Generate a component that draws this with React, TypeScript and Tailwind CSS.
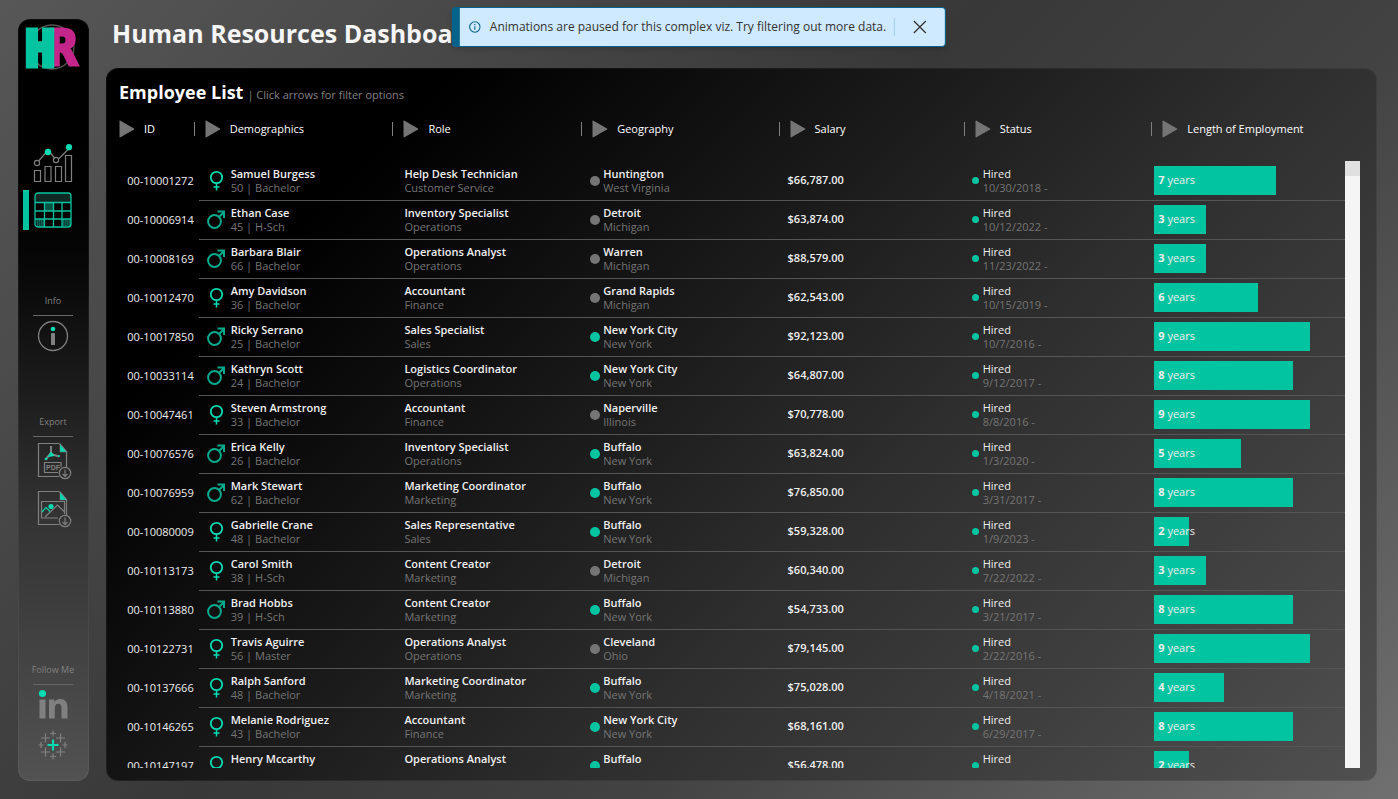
import React from "react";

type Gender = "f" | "m";

interface Employee {
  id: string;
  gender: Gender;
  name: string;
  profile: string;
  role: string;
  department: string;
  city: string;
  state: string;
  salary: string;
  hired: string;
  years: number;
}

type Row = [string, Gender, string, string, string, string, string, string, string, string, number];

const rows: Row[] = [
  ["00-10001272", "f", "Samuel Burgess", "50 | Bachelor", "Help Desk Technician", "Customer Service", "Huntington", "West Virginia", "$66,787.00", "10/30/2018 -", 7],
  ["00-10006914", "m", "Ethan Case", "45 | H-Sch", "Inventory Specialist", "Operations", "Detroit", "Michigan", "$63,874.00", "10/12/2022 -", 3],
  ["00-10008169", "m", "Barbara Blair", "66 | Bachelor", "Operations Analyst", "Operations", "Warren", "Michigan", "$88,579.00", "11/23/2022 -", 3],
  ["00-10012470", "f", "Amy Davidson", "36 | Bachelor", "Accountant", "Finance", "Grand Rapids", "Michigan", "$62,543.00", "10/15/2019 -", 6],
  ["00-10017850", "m", "Ricky Serrano", "25 | Bachelor", "Sales Specialist", "Sales", "New York City", "New York", "$92,123.00", "10/7/2016 -", 9],
  ["00-10033114", "m", "Kathryn Scott", "24 | Bachelor", "Logistics Coordinator", "Operations", "New York City", "New York", "$64,807.00", "9/12/2017 -", 8],
  ["00-10047461", "f", "Steven Armstrong", "33 | Bachelor", "Accountant", "Finance", "Naperville", "Illinois", "$70,778.00", "8/8/2016 -", 9],
  ["00-10076576", "m", "Erica Kelly", "26 | Bachelor", "Inventory Specialist", "Operations", "Buffalo", "New York", "$63,824.00", "1/3/2020 -", 5],
  ["00-10076959", "m", "Mark Stewart", "62 | Bachelor", "Marketing Coordinator", "Marketing", "Buffalo", "New York", "$76,850.00", "3/31/2017 -", 8],
  ["00-10080009", "f", "Gabrielle Crane", "48 | Bachelor", "Sales Representative", "Sales", "Buffalo", "New York", "$59,328.00", "1/9/2023 -", 2],
  ["00-10113173", "f", "Carol Smith", "38 | H-Sch", "Content Creator", "Marketing", "Detroit", "Michigan", "$60,340.00", "7/22/2022 -", 3],
  ["00-10113880", "m", "Brad Hobbs", "39 | H-Sch", "Content Creator", "Marketing", "Buffalo", "New York", "$54,733.00", "3/21/2017 -", 8],
  ["00-10122731", "f", "Travis Aguirre", "56 | Master", "Operations Analyst", "Operations", "Cleveland", "Ohio", "$79,145.00", "2/22/2016 -", 9],
  ["00-10137666", "f", "Ralph Sanford", "48 | Bachelor", "Marketing Coordinator", "Marketing", "Buffalo", "New York", "$75,028.00", "4/18/2021 -", 4],
  ["00-10146265", "f", "Melanie Rodriguez", "43 | Bachelor", "Accountant", "Finance", "New York City", "New York", "$68,161.00", "6/29/2017 -", 8],
  ["00-10147197", "f", "Henry Mccarthy", "43 | Bachelor", "Operations Analyst", "Operations", "Buffalo", "New York", "$56,478.00", "5/14/2023 -", 2],
];

const employees: Employee[] = rows.map(
  ([id, gender, name, profile, role, department, city, state, salary, hired, years]) => ({
    id, gender, name, profile, role, department, city, state, salary, hired, years,
  })
);

const MAX_YEARS = 11;

function Logo() {
  return (
    <svg width="60" height="48" viewBox="0 0 60 48" role="img" aria-label="HR">
      <circle cx="27" cy="23" r="22" fill="none" stroke="#555" strokeWidth="1.3" />
      <text x="23" y="41" fontFamily="'DejaVu Sans Mono', monospace" fontWeight="700" fontSize="49" fill="#c4268c" stroke="#c4268c" strokeWidth="3">R</text>
      <text x="0" y="42" fontFamily="'DejaVu Sans Mono', monospace" fontWeight="700" fontSize="50" fill="#03c4a1" stroke="#03c4a1" strokeWidth="5">H</text>
    </svg>
  );
}

function ChartIcon() {
  return (
    <svg width="42" height="40" viewBox="0 0 42 40" fill="none" stroke="#808080" strokeWidth="1.2">
      <path d="M7 16.5l7.5-8.5M18 8.5l5 6M27 14.5L37 4.5" />
      <circle cx="5" cy="19" r="2.6" />
      <circle cx="24" cy="16" r="2.6" />
      <circle cx="16" cy="8" r="3.2" fill="#03dbb2" stroke="none" />
      <circle cx="37" cy="3.2" r="3.1" fill="#03dbb2" stroke="none" />
      <path d="M2.5 26.5h6v11h-6zM13 22.5h6v15h-6zM23.500 22.500h6v15h-6zM33.500 11.500h6v26h-6z" />
    </svg>
  );
}

function TableIcon() {
  return (
    <svg width="38" height="36" viewBox="0 0 38 36" fill="none" stroke="#03c4a1" strokeWidth="1.3">
      <path d="M1 10V4q0-3 3-3h30q3 0 3 3v6z" fill="#0f2a25" stroke="none" />
      <path d="M11 11h8v8h-8zM2 27h9v8H3zM28 27h9v7H28z" fill="#066555" stroke="none" />
      <path d="M11.500 13h7M11.500 15h7M11.500 17h7M2 29h9M2 31h9M2 33h9M28 29h8M28 31h8M28 33h8" stroke="#04392f" strokeDasharray="1 1" />
      <rect x="1" y="1" width="36" height="34" rx="3" />
      <path d="M1 10.500h36M1 19h36M1 27h36M10.500 10.500V35M19.500 10.500V35M28 10.500V35" />
    </svg>
  );
}

function InfoIcon() {
  return (
    <svg width="32" height="32" viewBox="0 0 32 32">
      <circle cx="16" cy="16" r="14.500" fill="none" stroke="#808080" strokeWidth="1.3" />
      <circle cx="16" cy="9" r="2.300" fill="#03dbb2" />
      <rect x="14" y="13" width="4" height="12" rx="0.5" fill="#808080" />
    </svg>
  );
}

function FileIcon({ kind }: { kind: "pdf" | "image" }) {
  return (
    <svg width="36" height="38" viewBox="0 0 36 38" fill="none" stroke="#808080" strokeWidth="1.200">
      <path d="M22 1.500H1.500v33h21M22.500 1.500l7 8v16" />
      <path d="M23 2v8h6.500z" fill="#03dbb2" stroke="#808080" strokeWidth="0.500" />
      {kind === "pdf" ? (
        <>
          <path d="M14 4v7l-5 6M14 12l8 2.500" strokeWidth="2" />
          <path d="M14 10.500l-2.500 4 5-1z" fill="#03dbb2" stroke="#03dbb2" />
          <circle cx="9" cy="17" r="1.300" fill="#03dbb2" stroke="none" />
          <circle cx="22" cy="14" r="1" fill="#03dbb2" stroke="none" />
          <path d="M24 25v-4.500H7.500v10H21" />
          <text x="9" y="28" fontSize="7" fontWeight="700" fontFamily="'Liberation Sans', sans-serif" fill="#808080" stroke="none">PDF</text>
        </>
      ) : (
        <>
          <path d="M21 28H4.500V11.500h23V24" />
          <path d="M8 27l12.500-12 6.500 6.500" />
          <path d="M5 22l4-4.500 4 4" stroke="#03dbb2" />
          <circle cx="14" cy="16.500" r="2.600" fill="#03dbb2" stroke="none" />
        </>
      )}
      <circle cx="28" cy="31" r="5.700" />
      <path d="M28 27.500v7M25.500 32l2.500 2.500 2.500-2.500" />
    </svg>
  );
}

function LinkedInIcon() {
  return (
    <svg width="32" height="32" viewBox="0 0 32 32" fill="#808080">
      <circle cx="5.500" cy="4.500" r="3.600" fill="#03dbb2" />
      <rect x="2.500" y="10.500" width="6" height="19" />
      <path d="M12 10.500h5.300v2.600q2-3.100 6.200-3.100 7 0 7 8.500v11h-6V19.500q0-4.700-3.300-4.700-3.400 0-3.400 4.700v10H12z" />
    </svg>
  );
}

function TableauIcon() {
  return (
    <svg width="32" height="32" viewBox="0 0 32 32" fill="none" stroke="#808080" strokeWidth="1.200">
      <path d="M16 1.500v6M13 4.500h6M16 24.500v6M13 27.500h6M1.500 16h5M4 13v6M25.500 16h5M28 13v6" />
      <path d="M8.500 4.500v9M4 9h9M23.500 4.500v9M19 9h9M8.500 18.500v9M4 23h9M23.500 18.500v9M19 23h9" />
      <path d="M16 10.500v11M10.500 16h11" stroke="#03dbb2" strokeWidth="2" />
    </svg>
  );
}

function GenderIcon({ gender }: { gender: Gender }) {
  return gender === "f" ? (
    <svg width="20" height="22" viewBox="0 0 20 22" fill="none" stroke="#03dbb2" strokeWidth="1.800" aria-label="Female">
      <circle cx="10.500" cy="7.500" r="5.700" />
      <path d="M10.500 13.500v7M7.500 17h6" strokeWidth="1.500" />
    </svg>
  ) : (
    <svg width="20" height="22" viewBox="0 0 20 22" fill="none" stroke="#03ab8c" strokeWidth="2" aria-label="Male">
      <circle cx="8.500" cy="12.500" r="6.400" />
      <path d="M13 8l5-5M11.500 2.500h6.500v6.500" />
    </svg>
  );
}

function SectionLabel({ children }: { children: React.ReactNode }) {
  return (
    <h2 className="w-10 border-b border-[#666] pb-2 text-center text-[9px] leading-3 whitespace-nowrap text-[#808080]">
      <span className="-mx-2">{children}</span>
    </h2>
  );
}

function Sidebar() {
  return (
    <nav className="flex w-[71px] shrink-0 flex-col items-center rounded-xl border border-white/5 bg-linear-to-b from-black from-10% via-[#333] via-65% to-[#525252] bg-origin-border pr-px">
      <div className="mt-1 ml-1">
        <Logo />
      </div>
      <a href="#overview" aria-label="Overview" className="mt-[72px]">
        <ChartIcon />
      </a>
      <a href="#employees" aria-label="Employee list" aria-current="page" className="mt-[6px] flex w-full items-center gap-[5px] pl-1">
        <span className="h-10 w-[6px] bg-[#03c4a1]" />
        <TableIcon />
      </a>
      <div className="mt-[65px] flex flex-col items-center gap-1">
        <SectionLabel>Info</SectionLabel>
        <button aria-label="Info">
          <InfoIcon />
        </button>
      </div>
      <div className="mt-16 flex flex-col items-center gap-[5px]">
        <SectionLabel>Export</SectionLabel>
        <button aria-label="Export PDF" className="ml-[3px]">
          <FileIcon kind="pdf" />
        </button>
        <button aria-label="Export image" className="mt-[5px] ml-[3px]">
          <FileIcon kind="image" />
        </button>
      </div>
      <div className="mt-auto mb-[19px] flex flex-col items-center gap-1">
        <SectionLabel>Follow Me</SectionLabel>
        <a href="#linkedin" aria-label="LinkedIn">
          <LinkedInIcon />
        </a>
        <a href="#tableau" aria-label="Tableau" className="mt-1">
          <TableauIcon />
        </a>
      </div>
    </nav>
  );
}

const columns: { label: string; width: string }[] = [
  { label: "ID", width: "w-[6.5%]" },
  { label: "Demographics", width: "w-[15.8%]" },
  { label: "Role", width: "w-[15.4%]" },
  { label: "Geography", width: "w-[16.1%]" },
  { label: "Salary", width: "w-[15.1%]" },
  { label: "Status", width: "w-[15.3%]" },
  { label: "Length of Employment", width: "w-[15.8%]" },
];

function HeaderCell({ label, index }: { label: string; index: number }) {
  return (
    <th scope="col" className="h-[45px] p-0 align-top font-medium">
      <div className="flex h-6 items-center">
        {index > 1 && <span className="mr-[10px] h-[14px] w-px bg-[#808080]" />}
        <button className={index === 1 ? "flex items-center gap-[9px] pl-[6px]" : "flex items-center gap-[9px]"}>
          <svg width="16" height="18" viewBox="0 0 16 18" fill="#757575">
            <path d="M0.500 1.200q0-1 1-.5l13.500 7.700q.8.600 0 1.200L1.500 17.300q-1 .5-1-.5z" />
          </svg>
          <span className="whitespace-nowrap">{label}</span>
        </button>
        {index === 0 && <span className="mr-1 ml-auto h-[14px] w-px bg-[#808080]" />}
      </div>
    </th>
  );
}

function TwoLines({ top, bottom, plain }: { top: string; bottom: string; plain?: boolean }) {
  return (
    <div className="leading-[14px] whitespace-nowrap">
      <div className={plain ? "font-normal text-[#eee]" : "font-semibold text-[#f0f0f0]"}>{top}</div>
      <div className="text-[#757575]">{bottom}</div>
    </div>
  );
}

function EmployeeRow({ e }: { e: Employee }) {
  const cell = "h-[39px] border-b border-[#555] p-0";
  return (
    <tr>
      <td className="p-0 pr-[5px] text-right whitespace-nowrap text-[#eee]">{e.id}</td>
      <td className={cell}>
        <div className="flex items-center gap-[5px] pl-[7px]">
          <GenderIcon gender={e.gender} />
          <TwoLines top={e.name} bottom={e.profile} />
        </div>
      </td>
      <td className={cell}>
        <div className="pb-px pl-3">
          <TwoLines top={e.role} bottom={e.department} />
        </div>
      </td>
      <td className={cell}>
        <div className="flex items-center gap-[3px] pb-px pl-[9px]">
          <span className={e.state === "New York" ? "size-[10px] rounded-full bg-[#03c4a1]" : "size-[10px] rounded-full bg-[#757575]"} />
          <TwoLines top={e.city} bottom={e.state} />
        </div>
      </td>
      <td className={cell}>
        <div className="pb-px pl-[9px] font-semibold text-[#f0f0f0]">{e.salary}</div>
      </td>
      <td className={cell}>
        <div className="flex items-center gap-1 pb-px pl-2">
          <span className="size-[7px] rounded-full bg-[#03c4a1]" />
          <TwoLines top="Hired" bottom={e.hired} plain />
        </div>
      </td>
      <td className={cell}>
        <div className="pb-px pl-[3px]">
          <div className="flex h-[29px] items-center bg-[#03c4a1] pl-1 whitespace-nowrap text-[#eee]" style={{ width: `${(e.years / MAX_YEARS) * 100}%` }}>
            <span>
              <b className="font-bold">{e.years}</b> years
            </span>
          </div>
        </div>
      </td>
    </tr>
  );
}

function Toast() {
  return (
    <div role="status" className="absolute top-[7px] left-1/2 flex h-10 -translate-x-1/2 items-center rounded border border-l-8 border-[#05628a] bg-[#cfe9ff] pr-[18px] pl-[9px] whitespace-nowrap text-[#333] shadow-md">
      <svg width="12" height="12" viewBox="0 0 12 12" fill="none" stroke="#05628a" strokeWidth="1.100">
        <circle cx="6" cy="6" r="5.200" />
        <path d="M6 5.200v3.600M6 3v1.200" />
      </svg>
      <span className="ml-[9px] text-xs">Animations are paused for this complex viz. Try filtering out more data.</span>
      <span className="ml-2 h-[18px] w-px bg-[#9fd0f5]" />
      <button aria-label="Close" className="ml-[18px]">
        <svg width="14" height="14" viewBox="0 0 14 14" stroke="#333" strokeWidth="1.200">
          <path d="M1 1l12 12M13 1l-12 12" />
        </svg>
      </button>
    </div>
  );
}

export default function App() {
  return (
    <div className="relative flex h-screen gap-[17px] bg-[linear-gradient(135deg,#575757_0%,#383838_45%,#424242_65%,#707070_100%)] pt-[19px] pr-[21px] pb-[18px] pl-[18px] font-['Open_Sans',sans-serif] text-[11px]">
      <Sidebar />
      <main className="flex min-w-0 flex-1 flex-col">
        <h1 className="h-[49px] pl-[6px] text-[25px] leading-7 font-bold whitespace-nowrap text-[#f5f5f5]">Human Resources Dashboard</h1>
        <section className="flex min-h-0 flex-1 flex-col rounded-xl border border-white/5 bg-[linear-gradient(135deg,#000_18%,#2e2e2e_60%,#505050_100%)] bg-origin-border pt-[11px] pr-4 pb-3 pl-3">
          <div className="flex h-[37px] items-baseline gap-1 whitespace-nowrap">
            <h2 className="text-lg leading-6 font-bold text-white">Employee List</h2>
            <p className="text-[#808080]">| Click arrows for filter options</p>
          </div>
          <div className="flex min-h-0 flex-1">
            <div className="min-w-0 flex-1 overflow-hidden">
              <table className="w-full table-fixed border-separate border-spacing-0">
                <colgroup>
                  {columns.map((c) => (
                    <col key={c.label} className={c.width} />
                  ))}
                </colgroup>
                <thead className="text-left text-white">
                  <tr>
                    {columns.map((c, i) => (
                      <HeaderCell key={c.label} label={c.label} index={i} />
                    ))}
                  </tr>
                </thead>
                <tbody>
                  {employees.map((e) => (
                    <EmployeeRow key={e.id} e={e} />
                  ))}
                </tbody>
              </table>
            </div>
            <div className="mt-11 w-[15px] shrink-0 bg-[#f5f5f5]">
              <div className="h-[15px] bg-[#e0e0e0]" />
            </div>
          </div>
        </section>
      </main>
      <Toast />
    </div>
  );
}
